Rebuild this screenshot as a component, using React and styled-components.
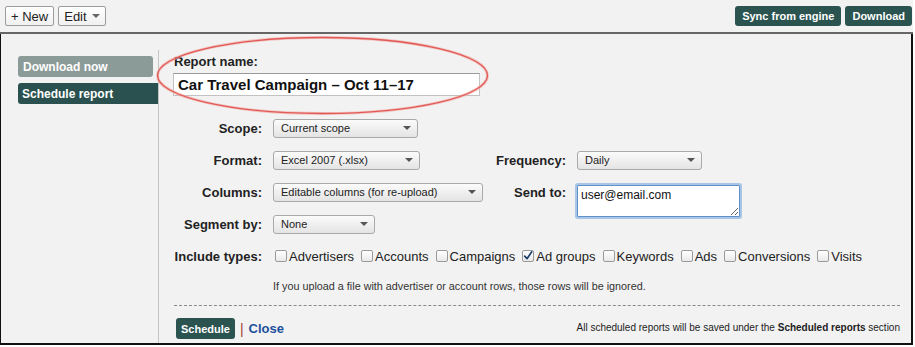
import styled, {createGlobalStyle} from 'styled-components';

const GlobalStyle = createGlobalStyle`
  body {
    margin: 0;
    background: #ffffff;
    font-family: "Liberation Sans", Arial, sans-serif;
    color: #222;
  }
`;

const Page = styled.div`
  position: relative;
  width: 915px;
  height: 347px;
`;

const Toolbar = styled.div`
  box-sizing: border-box;
  width: 913px;
  height: 34px;
  display: flex;
  justify-content: space-between;
  align-items: flex-start;
  padding: 6px 1px 0 5px;
  background: #f2f2f2;
  border-bottom: 2px solid #666;
`;

const ToolGroup = styled.div`
  display: flex;
  gap: ${props => props.gap || 4}px;
`;

const LightButton = styled.div`
  box-sizing: border-box;
  height: 20px;
  display: flex;
  align-items: center;
  gap: 5px;
  padding: 0 5px;
  border: 1px solid #9c9c9c;
  border-radius: 2px;
  background: linear-gradient(#ffffff, #f0f0f0);
  font-size: 13px;
  color: #222;
`;

const DarkButton = styled.div`
  box-sizing: border-box;
  height: ${props => props.h || 20}px;
  display: flex;
  align-items: center;
  padding: 0 ${props => props.pad || 6}px;
  border-radius: 3px;
  background: #2b5451;
  font-size: 11px;
  font-weight: bold;
  color: #fff;
`;

const Caret = styled.span`
  width: 0;
  height: 0;
  border-left: 4px solid transparent;
  border-right: 4px solid transparent;
  border-top: 4px solid ${props => props.color || '#666'};
`;

const Body = styled.div`
  box-sizing: border-box;
  width: 913px;
  height: 311px;
  display: flex;
  padding-top: 16px;
  background: #f2f2f2;
  border-left: 1px solid #111;
  border-right: 2px solid #111;
  border-bottom: 2px solid #111;
`;

const Sidebar = styled.div`
  box-sizing: border-box;
  width: 157px;
  flex-shrink: 0;
  display: flex;
  flex-direction: column;
  gap: 6px;
  padding: 6px 0 0 17px;
`;

const SideItem = styled.div`
  height: 21px;
  display: flex;
  align-items: center;
  margin-right: ${props => props.active ? 0 : 5}px;
  padding-left: ${props => props.active ? 4 : 5}px;
  border-radius: ${props => props.active ? '3px 0 0 3px' : '3px'};
  background: ${props => props.active ? '#2a514f' : '#8b9b98'};
  color: #fff;
  font-size: 12px;
  font-weight: bold;
`;

const Content = styled.div`
  flex: 1;
  display: flex;
  flex-direction: column;
  padding: 4px 11px 0 15px;
  border-left: 1px solid #c4c4c4;
`;

const NameLabel = styled.div`
  font-size: 13px;
  font-weight: bold;
  line-height: 15px;
  color: #222;
`;

const NameInput = styled.div`
  box-sizing: border-box;
  width: 307px;
  height: 23px;
  margin: 4px 0 0 -1px;
  display: flex;
  align-items: center;
  padding-left: 4px;
  background: #fff;
  border: 1px solid #c2c2c2;
  border-top-color: #9a9a9a;
  font-size: 15px;
  font-weight: bold;
  color: #111;
`;

const Form = styled.div`
  display: grid;
  grid-template-columns: 88px 212px 70px auto;
  grid-auto-rows: 32px;
  column-gap: 11px;
  align-items: center;
  margin-top: 16px;
`;

const Label = styled.div`
  text-align: right;
  font-size: 13px;
  font-weight: bold;
  color: #222;
  white-space: nowrap;
`;

const Cell = styled.div`
  grid-column: ${props => props.span ? '2 / -1' : 'auto'};
  display: flex;
`;

const Select = styled.div`
  box-sizing: border-box;
  width: ${props => props.w}px;
  height: 19px;
  display: flex;
  align-items: center;
  justify-content: space-between;
  padding: 0 6px 0 7px;
  border: 1px solid #a9a9a9;
  border-radius: 3px;
  background: linear-gradient(#fbfbfb, #e4e4e4);
  font-size: 11px;
  color: #222;
`;

const TextArea = styled.textarea`
  box-sizing: border-box;
  align-self: start;
  width: 163px;
  height: 32px;
  margin-top: 9px;
  padding: 2px 3px;
  border: 1px solid #5f92cc;
  border-radius: 1px;
  box-shadow: 0 0 0 2px rgba(110, 160, 220, 0.55);
  background: #fff;
  font-family: "Liberation Sans", Arial, sans-serif;
  font-size: 12px;
  color: #111;
  outline: none;
`;

const Checks = styled.div`
  grid-column: 2 / -1;
  display: flex;
  gap: 7px;
  padding-left: 2px;
`;

const CheckItem = styled.label`
  display: flex;
  align-items: center;
  gap: 2px;
  font-size: 13px;
  color: #222;
`;

const Box = styled.span`
  box-sizing: border-box;
  width: 12px;
  height: 12px;
  display: flex;
  align-items: center;
  justify-content: center;
  border: 1px solid #9a9a9a;
  border-radius: 2px;
  background: linear-gradient(#ffffff, #e9e9e9);
`;

const Note = styled.div`
  margin: 7px 0 0 99px;
  font-size: 10.8px;
  line-height: 14px;
  color: #333;
`;

const Dashed = styled.div`
  margin-top: 12px;
  border-top: 1px dashed #8a8a8a;
`;

const Footer = styled.div`
  display: flex;
  align-items: center;
  justify-content: space-between;
  margin-top: 12px;
  padding-left: 2px;
`;

const Actions = styled.div`
  display: flex;
  align-items: center;
  gap: 5px;
`;

const Pipe = styled.span`
  font-size: 14px;
  color: #a33b2e;
`;

const CloseLink = styled.a`
  font-size: 13px;
  font-weight: bold;
  color: #1c4f9c;
  text-decoration: none;
`;

const FootNote = styled.div`
  margin-top: -3px;
  font-size: 10px;
  color: #222;
`;

const Annotation = styled.svg`
  position: absolute;
  left: 0;
  top: 0;
  pointer-events: none;
`;

const FakeSelect = ({w, children}) => (
  <Select w={w}>
    <span>{children}</span>
    <Caret color="#555"/>
  </Select>
);

const types = [
  ['Advertisers', false],
  ['Accounts', false],
  ['Campaigns', false],
  ['Ad groups', true],
  ['Keywords', false],
  ['Ads', false],
  ['Conversions', false],
  ['Visits', false],
];

const App = () => {
  return (
    <Page>
      <GlobalStyle/>
      <Toolbar>
        <ToolGroup gap={4}>
          <LightButton>+ New</LightButton>
          <LightButton>Edit <Caret/></LightButton>
        </ToolGroup>
        <ToolGroup gap={4}>
          <DarkButton pad={7}>Sync from engine</DarkButton>
          <DarkButton pad={7}>Download</DarkButton>
        </ToolGroup>
      </Toolbar>
      <Body>
        <Sidebar>
          <SideItem>Download now</SideItem>
          <SideItem active>Schedule report</SideItem>
        </Sidebar>
        <Content>
          <NameLabel>Report name:</NameLabel>
          <NameInput>Car Travel Campaign – Oct 11–17</NameInput>
          <Form>
            <Label>Scope:</Label>
            <Cell span><FakeSelect w={145}>Current scope</FakeSelect></Cell>

            <Label>Format:</Label>
            <Cell><FakeSelect w={147}>Excel 2007 (.xlsx)</FakeSelect></Cell>
            <Label>Frequency:</Label>
            <Cell><FakeSelect w={125}>Daily</FakeSelect></Cell>

            <Label>Columns:</Label>
            <Cell><FakeSelect w={210}>Editable columns (for re-upload)</FakeSelect></Cell>
            <Label>Send to:</Label>
            <TextArea defaultValue="user@email.com"/>

            <Label>Segment by:</Label>
            <Cell span><FakeSelect w={102}>None</FakeSelect></Cell>

            <Label>Include types:</Label>
            <Checks>
              {types.map(([name, checked]) => (
                <CheckItem key={name}>
                  <Box>
                    {checked && (
                      <svg width="12" height="12" viewBox="0 0 12 12">
                        <path d="M2 6.2 L4.8 9.2 L10.5 1" fill="none" stroke="#1d3f6b" strokeWidth="2" strokeLinecap="round" strokeLinejoin="round"/>
                      </svg>
                    )}
                  </Box>
                  {name}
                </CheckItem>
              ))}
            </Checks>
          </Form>
          <Note>If you upload a file with advertiser or account rows, those rows will be ignored.</Note>
          <Dashed/>
          <Footer>
            <Actions>
              <DarkButton h={21} pad={5}>Schedule</DarkButton>
              <Pipe>|</Pipe>
              <CloseLink href="#">Close</CloseLink>
            </Actions>
            <FootNote>All scheduled reports will be saved under the <b>Scheduled reports</b> section</FootNote>
          </Footer>
        </Content>
      </Body>
      <Annotation width="915" height="347">
        <ellipse cx="322.5" cy="75.5" rx="165" ry="38" fill="none" stroke="#f2a3a0" strokeWidth="3" opacity="0.6"/>
        <ellipse cx="322.5" cy="75.5" rx="165" ry="38" fill="none" stroke="#e15a55" strokeWidth="1.3"/>
      </Annotation>
    </Page>
  );
};

export default App;
